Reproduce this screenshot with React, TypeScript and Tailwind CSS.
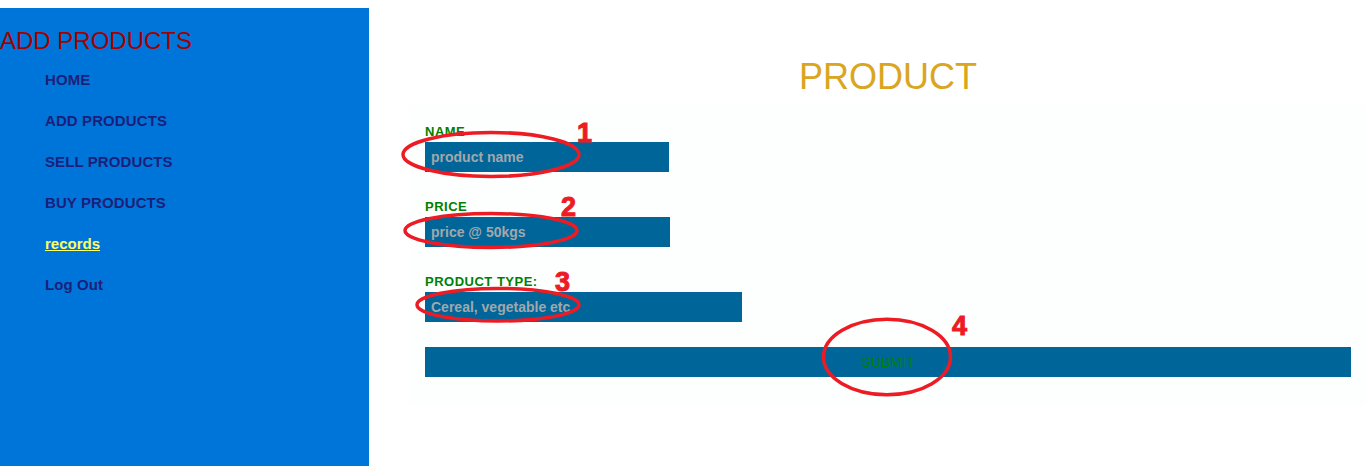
import React from "react";

const navItems = [
  { label: "HOME", active: false },
  { label: "ADD PRODUCTS", active: false },
  { label: "SELL PRODUCTS", active: false },
  { label: "BUY PRODUCTS", active: false },
  { label: "records", active: true },
  { label: "Log Out", active: false },
];

export default function App() {
  return (
    <div className="relative w-[1366px] h-[466px] overflow-hidden bg-white pt-[8px] flex font-['Liberation_Sans',Arial,sans-serif]">
      <aside className="w-[369px] h-[458px] bg-[#0075d9] shrink-0">
        <h2 className="mt-[19px] text-[24px] leading-[28px] text-[#a10000]">ADD PRODUCTS</h2>
        <nav className="flex flex-col pl-[45px] mt-[4px]">
          {navItems.map((item) => (
            <a
              key={item.label}
              href="#"
              className={
                item.active
                  ? "h-[41px] leading-[41px] text-[15px] font-bold text-[#ffff66] underline"
                  : "h-[41px] leading-[41px] text-[15px] font-bold tracking-[0.1px] text-[#1c1f7a]"
              }
            >
              {item.label}
            </a>
          ))}
        </nav>
      </aside>
      <main className="flex-1">
        <h1 className="mt-[48px] ml-[56px] w-[926px] text-center text-[36px] leading-[42px] text-[#daa520]">PRODUCT</h1>
        <form className="mt-[7px] ml-[40px] w-[957px] h-[300px] bg-[#fdfefe] pt-[19px] pl-[16px] flex flex-col">
          <label className="text-[13px] leading-[15px] font-bold tracking-[0.5px] text-[#008000]">NAME</label>
          <input
            placeholder="product name"
            className="mt-[3px] w-[244px] h-[30px] bg-[#006699] px-[6px] text-[14px] font-bold text-[#a9a9a9] placeholder:text-[#a3a7ab] outline-none"
          />
          <label className="mt-[27px] text-[13px] leading-[15px] font-bold tracking-[0.5px] text-[#008000]">PRICE</label>
          <input
            placeholder="price @ 50kgs"
            className="mt-[3px] w-[245px] h-[30px] bg-[#006699] px-[6px] text-[14px] font-bold text-[#a9a9a9] placeholder:text-[#a3a7ab] outline-none"
          />
          <label className="mt-[27px] text-[13px] leading-[15px] font-bold tracking-[0.5px] text-[#008000]">PRODUCT TYPE:</label>
          <input
            placeholder="Cereal, vegetable etc"
            className="mt-[3px] w-[317px] h-[30px] bg-[#006699] px-[6px] text-[14px] font-bold text-[#a9a9a9] placeholder:text-[#a3a7ab] outline-none"
          />
          <button
            type="button"
            className="mt-[25px] w-[926px] h-[30px] bg-[#006699] text-[14px] text-[#008000]"
          >
            SUBMIT
          </button>
        </form>
      </main>
      <svg
        className="absolute left-0 top-0 pointer-events-none"
        width="1366"
        height="466"
        viewBox="0 0 1366 466"
      >
        <g fill="none" stroke="#ed1c24" strokeWidth="3.5">
          <ellipse cx="491" cy="154.5" rx="88" ry="22" />
          <ellipse cx="491" cy="230.5" rx="86" ry="17" />
          <ellipse cx="498" cy="304.7" rx="81" ry="16.3" />
          <ellipse cx="887" cy="357" rx="63.5" ry="37.7" />
        </g>
        <g
          fill="#ed1c24"
          stroke="#ed1c24"
          strokeWidth="1"
          fontFamily="'Liberation Sans', Arial, sans-serif"
          fontWeight="bold"
          fontSize="27"
        >
          <text x="577" y="142">1</text>
          <text x="561" y="216">2</text>
          <text x="555" y="290.5">3</text>
          <text x="952" y="335">4</text>
        </g>
      </svg>
    </div>
  );
}
